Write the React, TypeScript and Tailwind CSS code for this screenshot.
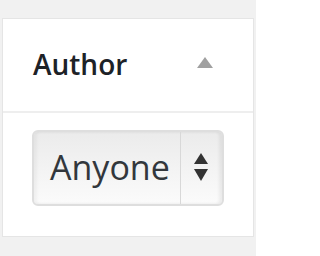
import React from "react";

function SortArrows() {
  return (
    <svg width="16" height="30" viewBox="0 0 16 30" className="block">
      <path d="M8 0 L15 11 L1 11 Z" fill="#333" />
      <path d="M1 16 L15 16 L8 28 Z" fill="#333" />
    </svg>
  );
}

export default function App() {
  return (
    <div
      className="w-[256px] h-[256px] bg-[#f1f1f1] pt-[18px] pl-[2px]"
      style={{ fontFamily: '"Open Sans", "Liberation Sans", sans-serif' }}
    >
      <div className="w-[252px] h-[219px] bg-white border border-[#e5e5e5] flex flex-col">
        <div className="h-[94px] flex items-center border-b-2 border-[#eeeeee] pl-[30px] pr-[40px]">
          <span className="text-[28px] font-semibold text-[#1d2227] leading-none flex-1 -mt-[2px]">
            Author
          </span>
          <svg width="16" height="11" viewBox="0 0 16 11" className="-mt-[6px]">
            <path d="M8 0 L16 11 L0 11 Z" fill="#a0a0a0" />
          </svg>
        </div>
        <div className="pt-[17px] pl-[29px]">
          <div className="w-[192px] h-[76px] flex rounded-[6px] border-2 border-[#dedede] bg-gradient-to-b from-[#ebebeb] to-[#fbfbfb] shadow-[inset_-3px_0_3px_rgba(0,0,0,0.06),inset_3px_0_3px_rgba(0,0,0,0.04)]">
            <div className="flex-1 flex items-center pl-[16px] text-[34px] text-[#32373c] leading-none">
              <span className="-mt-[2px]">Anyone</span>
            </div>
            <div className="w-[1px] bg-[#d8d8d8]" />
            <div className="w-[41px] flex items-center justify-center pr-[2px]">
              <SortArrows />
            </div>
          </div>
        </div>
      </div>
    </div>
  );
}
